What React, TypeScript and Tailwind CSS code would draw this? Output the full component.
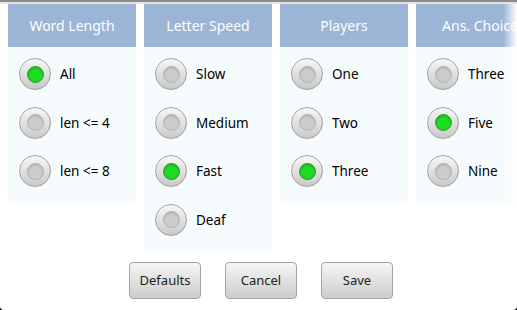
import React, { useState } from "react";

type Group = {
  title: string;
  options: string[];
  selected: number;
};

const groups: Group[] = [
  { title: "Word Length", options: ["All", "len <= 4", "len <= 8"], selected: 0 },
  { title: "Letter Speed", options: ["Slow", "Medium", "Fast", "Deaf"], selected: 2 },
  { title: "Players", options: ["One", "Two", "Three"], selected: 2 },
  { title: "Ans. Choice", options: ["Three", "Five", "Nine"], selected: 1 },
];

const Radio = ({ checked }: { checked: boolean }) => (
  <div className="flex h-8 w-8 shrink-0 items-center justify-center rounded-full border border-[#a0a0a0] bg-gradient-to-b from-[#f7f7f7] to-[#c9c9c9] shadow-[inset_0_1px_0_#ffffff]">
    {checked ? (
      <div className="h-[17px] w-[17px] rounded-full border border-[#2e9a2e] bg-[#1fdc1f] shadow-[inset_0_1px_2px_rgba(0,80,0,0.35)]" />
    ) : (
      <div className="h-[17px] w-[17px] rounded-full border border-[#b4b4b4] bg-[#cdcdcd] shadow-[inset_0_1px_2px_rgba(0,0,0,0.18)]" />
    )}
  </div>
);

const Column = ({
  group,
  value,
  onPick,
}: {
  group: Group;
  value: number;
  onPick: (i: number) => void;
}) => (
  <div className="flex w-32 shrink-0 flex-col">
    <div className="flex h-[43px] items-center justify-center bg-[#9cb4d6] text-[14px] text-white">
      {group.title}
    </div>
    <div className="bg-[#f6fcfd] pt-[3px] pb-[7px]">
      {group.options.map((opt, i) => (
        <div
          key={opt}
          onClick={() => onPick(i)}
          className="flex h-[48.5px] cursor-pointer items-center gap-[9px] pl-[11px] text-[13.5px] text-black"
        >
          <Radio checked={value === i} />
          <span>{opt}</span>
        </div>
      ))}
    </div>
  </div>
);

export default function App() {
  const [values, setValues] = useState<number[]>(groups.map((g) => g.selected));

  const pick = (col: number, i: number) => {
    setValues((v) => v.map((x, k) => (k === col ? i : x)));
  };

  return (
    <div
      className="h-[310px] w-[517px] bg-black"
      style={{ fontFamily: '"Noto Sans", "Open Sans", sans-serif' }}
    >
      <div className="flex h-full flex-col rounded-b-[4px] bg-white">
        <div className="h-[2px] bg-[#8c8c8c]" />
        <div className="h-[2px] bg-[#e4e4e4]" />
        <div className="relative overflow-hidden">
          <div className="flex items-start gap-2 pl-2">
            {groups.map((g, col) => (
              <Column key={g.title} group={g} value={values[col]} onPick={(i) => pick(col, i)} />
            ))}
          </div>
          <div className="pointer-events-none absolute top-0 right-0 h-full w-[14px] bg-gradient-to-r from-transparent to-white" />
        </div>
        <div className="mt-auto mb-[11px] flex justify-center gap-6 pl-[5px]">
          {["Defaults", "Cancel", "Save"].map((b) => (
            <button
              key={b}
              className="h-[37px] w-[72px] rounded-[4px] border border-[#a4a4a4] bg-gradient-to-b from-[#f6f6f6] to-[#cdcdcd] text-[13px] text-[#222]"
            >
              {b}
            </button>
          ))}
        </div>
      </div>
    </div>
  );
}
